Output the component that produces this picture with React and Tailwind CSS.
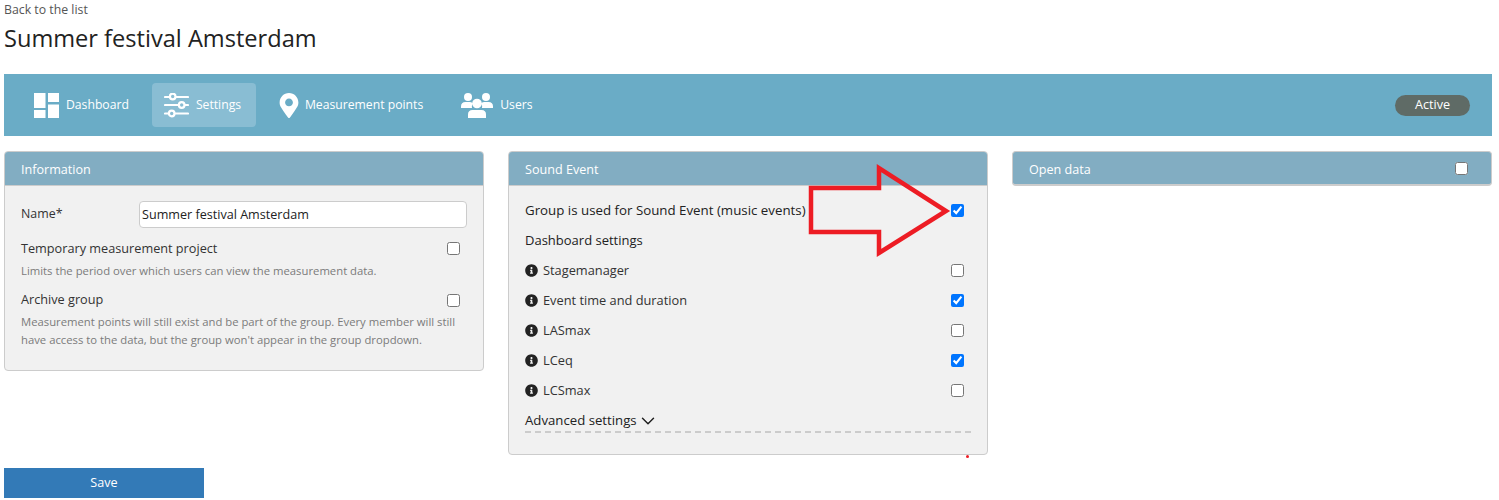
import React from 'react';
import { ChevronDown } from 'lucide-react';
import { FaInfoCircle, FaMapMarkerAlt } from 'react-icons/fa';

const DashboardIcon = () => (
  <svg width="25" height="25" viewBox="0 0 25 25" fill="#fff" className="shrink-0">
    <rect x="0" y="0" width="11.5" height="15" />
    <rect x="0" y="17" width="11.5" height="8" />
    <rect x="14" y="0" width="11" height="9" />
    <rect x="14" y="11.5" width="11" height="13.5" />
  </svg>
);

const SlidersIcon = () => (
  <svg width="25" height="25" viewBox="0 0 25 25" fill="none" stroke="#fff" strokeWidth="2.2" strokeLinecap="round" className="shrink-0">
    <path d="M1 4h23M1 12h23M1 20.5h23" />
    <circle cx="8.7" cy="3.5" r="2.8" fill="#89bdd3" strokeWidth="2.2" />
    <circle cx="17.7" cy="12" r="2.8" fill="#89bdd3" strokeWidth="2.2" />
    <circle cx="7.7" cy="20.5" r="2.8" fill="#89bdd3" strokeWidth="2.2" />
  </svg>
);

const UsersIcon = () => (
  <svg width="32" height="25" viewBox="0 0 32 25" fill="#fff" className="shrink-0 mr-[7px]">
    <circle cx="7" cy="4" r="4" />
    <circle cx="25" cy="4" r="4" />
    <path d="M0 15V13.5Q0 9 4.5 9H9Q11 9 12 10.5Q10.5 12.5 11 15Z" />
    <path d="M32 15V13.5Q32 9 27.5 9H23Q21 9 20 10.5Q21.5 12.5 21 15Z" />
    <circle cx="16" cy="10.5" r="4.8" />
    <path d="M7 25V21.5Q7 17 11.5 17H20.5Q25 17 25 21.5V25Z" />
  </svg>
);

const NavItem = ({ icon, label, active, className = '' }) => (
  <div className={`flex items-center h-[44px] rounded-sm text-[12.2px] text-white ${active ? 'bg-[#89bdd3]' : ''} ${className}`}>
    {icon}
    <span>{label}</span>
  </div>
);

const Panel = ({ title, children }) => (
  <div className="rounded border border-[#ccc] bg-[#f1f1f1] overflow-hidden">
    <div className="h-[33px] bg-[#82adc2] px-4 pt-[3px] flex items-center text-[12.6px] text-white">{title}</div>
    <div className="border-t border-[#ccc]">{children}</div>
  </div>
);

const Check = ({ checked }) => (
  <input type="checkbox" defaultChecked={checked} className="w-[13px] h-[13px] m-0 shrink-0" />
);

const InfoRow = ({ label, checked }) => (
  <div className="h-[30px] flex items-center justify-between pr-[7px] text-[12.8px] text-[#333]">
    <div className="flex items-center gap-[5px]">
      <FaInfoCircle className="w-[13px] h-[13px] text-[#222]" />
      <span className="pt-[2px]">{label}</span>
    </div>
    <Check checked={checked} />
  </div>
);

export default function App() {
  return (
    <div className="relative w-[1499px] h-[500px] overflow-hidden bg-white pl-1 font-['Open_Sans',sans-serif] text-[#222]">
      <div className="h-[18px] pt-[1px] text-[12.3px] leading-[18px] text-[#555]">Back to the list</div>
      <h1 className="mt-[4px] h-[32px] text-[23.6px] leading-[32px] text-[#222]">Summer festival Amsterdam</h1>

      <nav className="mt-[20px] w-[1488px] h-[62px] bg-[#6aacc6] flex items-center pl-[30px] pr-[22px]">
        <NavItem icon={<span className="mr-[7px] flex"><DashboardIcon /></span>} label="Dashboard" />
        <NavItem active className="ml-[23px] w-[104px] pl-[12px]" icon={<span className="mr-[7px] flex"><SlidersIcon /></span>} label="Settings" />
        <NavItem className="ml-[23px]" icon={<FaMapMarkerAlt className="w-[20px] h-[25px] mr-[6px]" />} label="Measurement points" />
        <NavItem className="ml-[38px]" icon={<UsersIcon />} label="Users" />
        <div className="ml-auto w-[75px] h-[21px] rounded-full bg-[#5f6b66] text-white text-[12.6px] flex items-center justify-center">Active</div>
      </nav>

      <div className="mt-[15px] w-[1488px] grid grid-cols-3 gap-6 items-start">
        <Panel title="Information">
          <div className="pl-4 pr-4 pt-[15px] pb-[21px]">
            <div className="flex items-center h-[27px]">
              <label className="w-[118px] pb-[1px] text-[12.4px] text-[#333]">Name*</label>
              <input
                defaultValue="Summer festival Amsterdam"
                className="flex-1 h-[27px] rounded border border-[#ccc] bg-white px-[2px] text-[12.6px] text-[#222]"
              />
            </div>
            <div className="mt-[11px] h-[18px] flex items-center justify-between pr-[7px] text-[12.7px] text-[#333]">
              <span className="pt-[2px]">Temporary measurement project</span>
              <Check />
            </div>
            <p className="mt-[5px] text-[11.3px] leading-[18px] text-[#7b7b7b]">Limits the period over which users can view the measurement data.</p>
            <div className="mt-[11px] h-[18px] flex items-center justify-between pr-[7px] text-[12.7px] text-[#333]">
              <span>Archive group</span>
              <Check />
            </div>
            <p className="mt-[4px] text-[11.3px] leading-[18px] text-[#7b7b7b]">
              Measurement points will still exist and be part of the group. Every member will still have access to the data, but the group won't appear in the group dropdown.
            </p>
          </div>
        </Panel>

        <Panel title="Sound Event">
          <div className="px-4 pt-[9px] pb-[21px]">
            <div className="h-[30px] flex items-center justify-between pr-[7px] text-[13.3px] font-medium text-[#222]">
              <span className="pt-[2px]">Group is used for Sound Event (music events)</span>
              <Check checked />
            </div>
            <div className="h-[30px] pt-[2px] flex items-center text-[13px] font-medium text-[#222]">Dashboard settings</div>
            <InfoRow label="Stagemanager" />
            <InfoRow label="Event time and duration" checked />
            <InfoRow label="LASmax" />
            <InfoRow label="LCeq" checked />
            <InfoRow label="LCSmax" />
            <div className="h-[28px] border-b-2 border-dashed border-[#ccc] flex items-center pt-[5px] text-[13.2px] font-medium text-[#222]">
              <span>Advanced settings</span>
              <ChevronDown className="w-[22px] h-[22px]" strokeWidth={1.6} />
            </div>
          </div>
        </Panel>

        <div className="rounded border border-[#ccc] border-b-2 bg-[#82adc2] h-[35px] pl-4 pr-[23px] flex items-center justify-between text-[12.6px] text-white">
          <span className="pt-[5px]">Open data</span>
          <Check />
        </div>
      </div>

      <button className="absolute left-1 top-[468px] w-[200px] h-[30px] bg-[#337ab7] text-white text-[12.6px] font-medium">Save</button>

      {/* annotation arrow drawn over the screenshot */}
      <svg className="absolute left-[800px] top-[160px] pointer-events-none" width="160" height="100" viewBox="800 160 160 100" fill="none">
        <path d="M811 188H879V168L946 211L879 253V232H811Z" stroke="#ed1c24" strokeWidth="4.5" strokeLinejoin="miter" />
      </svg>
      <div className="absolute left-[966px] top-[455px] w-[3px] h-[3px] rounded-full bg-[#ed1c24]" />
    </div>
  );
}
